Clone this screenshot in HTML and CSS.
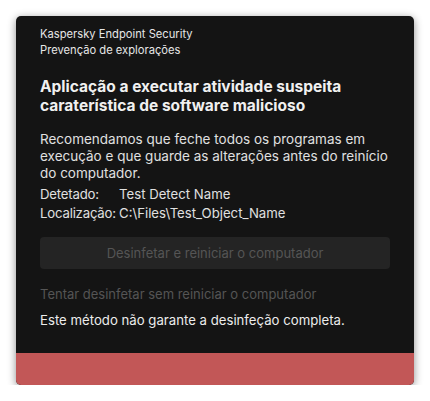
FILE: index.html
```html
<!doctype html>
<html lang="pt">
    <head>
        <meta charset="UTF-8" />
        <title>Prevenção de explorações</title>
        <link rel="stylesheet" href="styles.css">
    </head>
    <body>
        <div class="notice">
            <div class="notice-body">
                <div class="app-name">Kaspersky Endpoint Security</div>
                <div class="component">Prevenção de explorações</div>

                <h2 class="title">Aplicação a executar atividade suspeita caraterística de software malicioso</h2>

                <p class="message">Recomendamos que feche todos os programas em execução e que guarde as alterações antes do reinício do computador.</p>

                <div class="details">
                    <span class="label">Detetado:</span>
                    <span class="value">Test Detect Name</span>
                    <span class="label">Localização:</span>
                    <span class="value">C:\Files\Test_Object_Name</span>
                </div>

                <button type="button" class="btn-primary" disabled>Desinfetar e reiniciar o computador</button>

                <div class="link-disabled">Tentar desinfetar sem reiniciar o computador</div>
                <div class="hint">Este método não garante a desinfeção completa.</div>
            </div>
            <div class="notice-footer"></div>
        </div>
    </body>
</html>
```

FILE: styles.css
```css
body {
    margin: 0;
    background-color: #ffffff;
    font-family: Inter, "Noto Sans", sans-serif;
}
.notice {
    margin: 16px 0 0 16px;
    width: 398px;
    height: 369px;
    background: #141414;
    border-radius: 5px;
    box-shadow: 0 2px 8px rgba(0, 0, 0, 0.45);
    display: flex;
    flex-direction: column;
    overflow: hidden;
}
.notice-body {
    flex: 1;
    padding: 10px 24px 0 24px;
    color: #e8e8e8;
}
.app-name,
.component {
    font-size: 11.2px;
    line-height: 16px;
    color: #e6e6e6;
}
.title {
    margin: 19px 0 0 0;
    font-size: 15.5px;
    line-height: 19px;
    font-weight: 700;
    color: #f0f0f0;
}
.message {
    margin: 16px 0 0 0;
    font-size: 13.5px;
    line-height: 17px;
    color: #e0e0e0;
}
.details {
    margin-top: 3px;
    display: grid;
    grid-template-columns: 79px 1fr;
    font-size: 13.2px;
    line-height: 19px;
    color: #e0e0e0;
}
.label {
    letter-spacing: -0.2px;
}
.btn-primary {
    display: block;
    width: 100%;
    height: 32px;
    margin-top: 14px;
    border: none;
    border-radius: 4px;
    background-color: #242424;
    color: #555555;
    font-family: inherit;
    font-size: 13px;
}
.link-disabled {
    margin-top: 17px;
    font-size: 13px;
    line-height: 17px;
    color: #555555;
}
.hint {
    margin-top: 9px;
    font-size: 13.2px;
    line-height: 17px;
    color: #ececec;
}
.notice-footer {
    height: 32px;
    background-color: #c25757;
}
```
